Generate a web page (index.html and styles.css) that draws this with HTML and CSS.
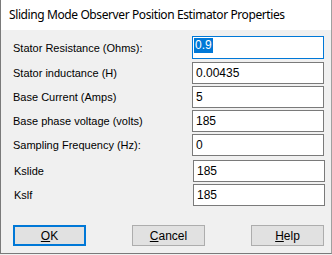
FILE: index.html
```html
<!DOCTYPE html>
<html lang="en">
  <head>
    <meta charset="UTF-8" />
    <meta name="viewport" content="width=device-width, initial-scale=1.0" />
    <title>Sliding Mode Observer Position Estimator Properties</title>
    <link rel="stylesheet" href="styles.css">
  </head>
  <body>
    <div class="dialog">
      <div class="titlebar">Sliding Mode Observer Position Estimator Properties</div>

      <div class="content">
        <div class="fields">
          <div class="row first">
            <label>Stator Resistance (Ohms):</label>
            <div class="box focused"><span class="sel">0.9</span></div>
          </div>
          <div class="row">
            <label>Stator inductance (H)</label>
            <div class="box">0.00435</div>
          </div>
          <div class="row">
            <label>Base Current (Amps)</label>
            <div class="box">5</div>
          </div>
          <div class="row">
            <label>Base phase voltage (volts)</label>
            <div class="box">185</div>
          </div>
          <div class="row">
            <label>Sampling Frequency (Hz):</label>
            <div class="box">0</div>
          </div>
        </div>

        <div class="fields gains">
          <div class="row">
            <label>Kslide</label>
            <div class="box">185</div>
          </div>
          <div class="row">
            <label>Kslf</label>
            <div class="box">185</div>
          </div>
        </div>

        <div class="buttons">
          <button class="btn default"><u>O</u>K</button>
          <button class="btn"><u>C</u>ancel</button>
          <button class="btn"><u>H</u>elp</button>
        </div>
      </div>
    </div>
  </body>
</html>
```

FILE: styles.css
```css
body {
  margin: 0;
  background: #f0f0f0;
  font-family: "Liberation Sans", Arial, sans-serif;
}
.dialog {
  width: 330px;
  height: 253px;
  border-left: 1px solid #7a7a7a;
  border-right: 1px solid #a0a0a0;
  border-bottom: 1px solid #7a7a7a;
  background: #f0f0f0;
}
.titlebar {
  height: 30px;
  line-height: 30px;
  padding-left: 8px;
  background: #ffffff;
  color: #000;
  font-family: "Noto Sans", sans-serif;
  font-size: 12px;
  letter-spacing: -0.4px;
}
.content {
  padding: 6px 7px 0 12px;
}
.fields {
  display: flex;
  flex-direction: column;
  gap: 2px;
}
.fields.gains {
  margin-top: 4px;
  padding-left: 1px;
  margin-right: -1px;
}
.row {
  display: flex;
  align-items: center;
  justify-content: space-between;
  height: 22px;
}
.row.first {
  height: 23px;
  margin-bottom: 1px;
}
.row label {
  font-size: 11px;
  color: #000;
}
.box {
  box-sizing: border-box;
  width: 132px;
  height: 100%;
  border: 1px solid #7a7a7a;
  background: #fff;
  padding: 3px 0 0 3px;
  font-size: 12px;
  line-height: 15px;
  color: #000;
}
.box.focused {
  border-color: #0078d7;
  padding: 0 0 0 1px;
}
.sel {
  display: inline-block;
  margin-top: 1px;
  padding: 0 1px;
  line-height: 15px;
  background: #0078d7;
  color: #fff;
}
.buttons {
  display: flex;
  justify-content: space-between;
  margin-top: 19px;
}
.btn {
  box-sizing: border-box;
  width: 73px;
  height: 21px;
  border: 1px solid #adadad;
  background: #e1e1e1;
  font-family: "Liberation Sans", Arial, sans-serif;
  font-size: 12px;
  color: #000;
  padding: 0;
}
.btn.default {
  border: 2px solid #0078d7;
}
```
